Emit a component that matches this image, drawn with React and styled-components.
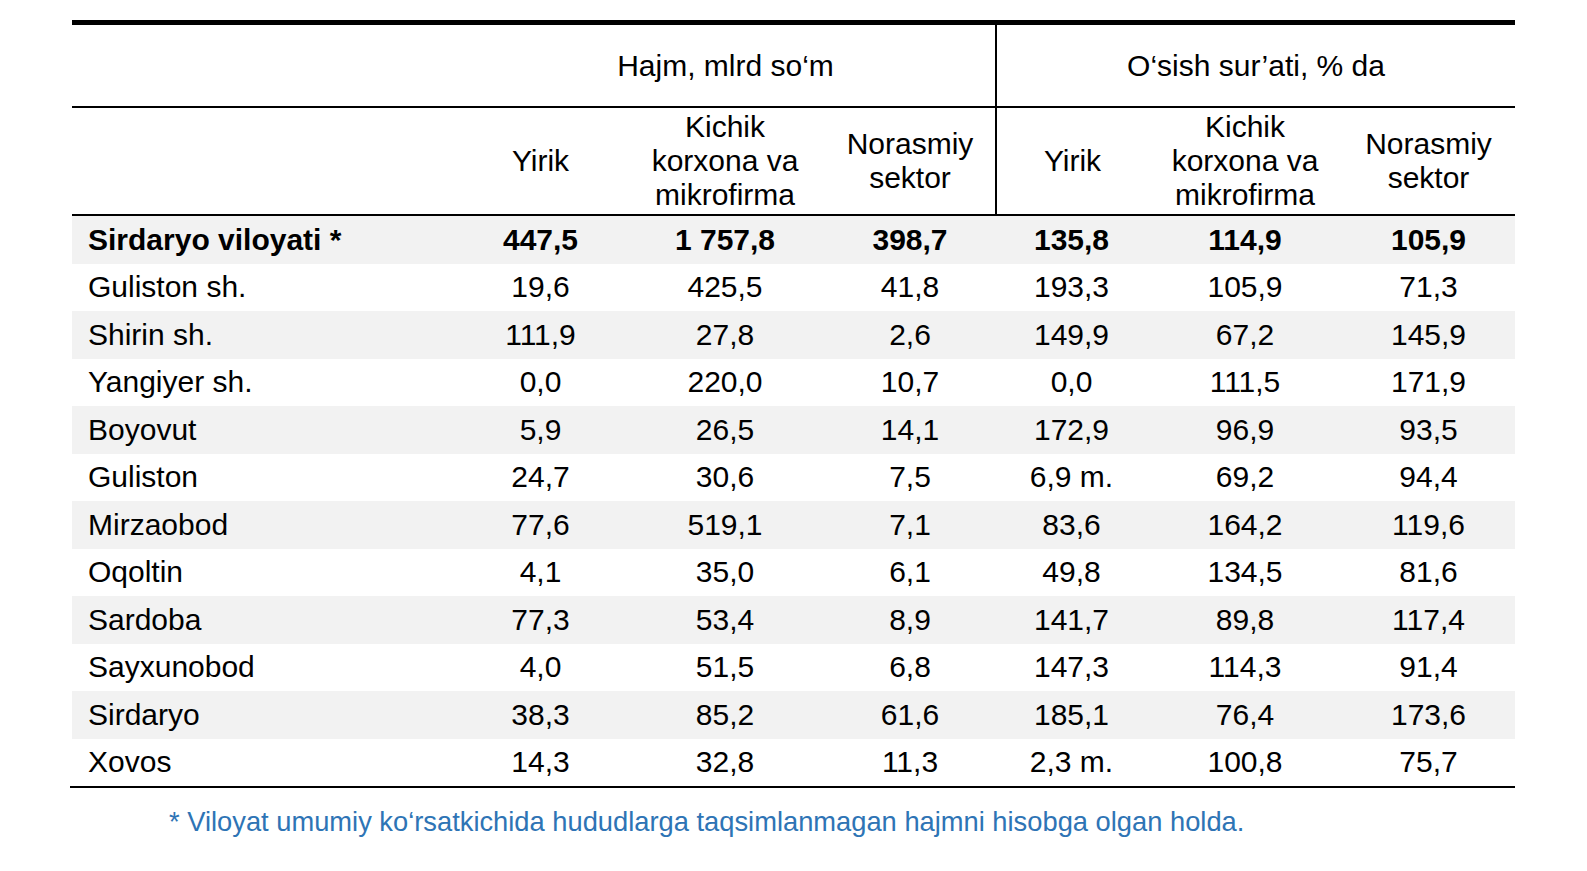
import React from 'react';
import styled, { createGlobalStyle } from 'styled-components';

const GlobalStyle = createGlobalStyle`
	html, body {
		margin: 0;
		padding: 0;
		background: #ffffff;
	}
	body {
		font-family: "Liberation Sans", Arial, sans-serif;
		color: #000000;
	}
`;

// column widths measured from the reference
const COLS = '384px 169px 200px 170px 153px 194px 173px';

const Page = styled.div`
	padding: 20px 0 0 72px;
	width: 1443px;
`;

const Table = styled.div`
	border-top: 5px solid #000;
	font-size: 30px;
`;

const HeadRow = styled.div`
	display: grid;
	grid-template-columns: ${COLS};
	height: ${({ tall }) => (tall ? '106px' : '81px')};
	border-bottom: 2px solid #000;
`;

const HeadCell = styled.div`
	grid-column: ${({ span }) => span || 'auto'};
	display: flex;
	align-items: center;
	justify-content: center;
	text-align: center;
	line-height: 34px;
	border-left: ${({ divider }) => (divider ? '2px solid #000' : 'none')};
`;

const Body = styled.div`
	margin-left: -2px;
	padding-left: 2px;
	border-bottom: 2px solid #000;
`;

const Row = styled.div`
	display: grid;
	grid-template-columns: ${COLS};
	height: 47.5px;
	align-items: center;
	background: ${({ shaded }) => (shaded ? '#f2f2f2' : '#ffffff')};
	font-weight: ${({ bold }) => (bold ? 700 : 400)};
`;

const Name = styled.div`
	padding-left: 16px;
	white-space: nowrap;
`;

const Value = styled.div`
	text-align: center;
	white-space: nowrap;
`;

const Note = styled.p`
	margin: 19px 0 0 97px;
	font-size: 27.3px;
	line-height: 30px;
	color: #2e74b5;
	white-space: nowrap;
`;

const rows = [
	['Sirdaryo viloyati *', '447,5', '1 757,8', '398,7', '135,8', '114,9', '105,9'],
	['Guliston sh.', '19,6', '425,5', '41,8', '193,3', '105,9', '71,3'],
	['Shirin sh.', '111,9', '27,8', '2,6', '149,9', '67,2', '145,9'],
	['Yangiyer sh.', '0,0', '220,0', '10,7', '0,0', '111,5', '171,9'],
	['Boyovut', '5,9', '26,5', '14,1', '172,9', '96,9', '93,5'],
	['Guliston', '24,7', '30,6', '7,5', '6,9 m.', '69,2', '94,4'],
	['Mirzaobod', '77,6', '519,1', '7,1', '83,6', '164,2', '119,6'],
	['Oqoltin', '4,1', '35,0', '6,1', '49,8', '134,5', '81,6'],
	['Sardoba', '77,3', '53,4', '8,9', '141,7', '89,8', '117,4'],
	['Sayxunobod', '4,0', '51,5', '6,8', '147,3', '114,3', '91,4'],
	['Sirdaryo', '38,3', '85,2', '61,6', '185,1', '76,4', '173,6'],
	['Xovos', '14,3', '32,8', '11,3', '2,3 m.', '100,8', '75,7'],
];

const SubHeads = ({ divider }) => (
	<>
		<HeadCell divider={divider}>Yirik</HeadCell>
		<HeadCell>
			Kichik
			<br />
			korxona va
			<br />
			mikrofirma
		</HeadCell>
		<HeadCell>
			Norasmiy
			<br />
			sektor
		</HeadCell>
	</>
);

export default function App() {
	return (
		<Page>
			<GlobalStyle />
			<Table>
				<HeadRow>
					<HeadCell />
					<HeadCell span="2 / 5">Hajm, mlrd so‘m</HeadCell>
					<HeadCell span="5 / 8" divider>
						O‘sish sur’ati, % da
					</HeadCell>
				</HeadRow>
				<HeadRow tall>
					<HeadCell />
					<SubHeads />
					<SubHeads divider />
				</HeadRow>
				<Body>
					{rows.map(([name, ...vals], i) => (
						<Row key={name + i} shaded={i % 2 === 0} bold={i === 0}>
							<Name>{name}</Name>
							{vals.map((v, j) => (
								<Value key={j}>{v}</Value>
							))}
						</Row>
					))}
				</Body>
			</Table>
			<Note>* Viloyat umumiy ko‘rsatkichida hududlarga taqsimlanmagan hajmni hisobga olgan holda.</Note>
		</Page>
	);
}
